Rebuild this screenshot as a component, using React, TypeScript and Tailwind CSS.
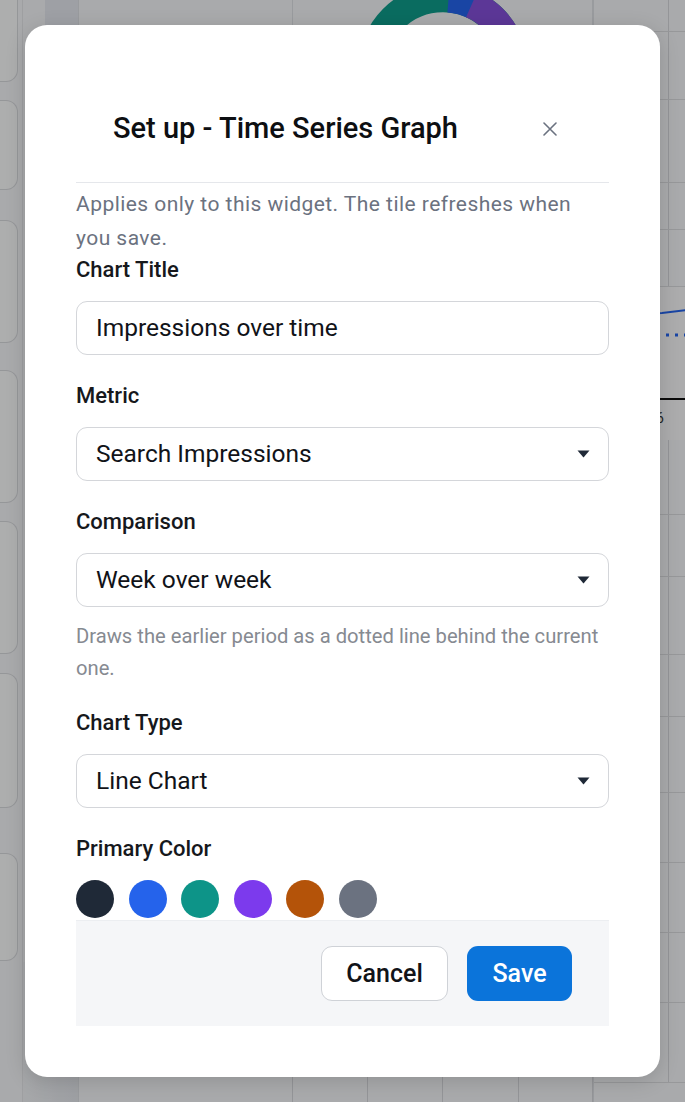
import React from "react";

const FONT = { fontFamily: "Roboto, 'Noto Sans', sans-serif" };

function Caret() {
  return (
    <svg width="13" height="8" viewBox="0 0 13 8" className="shrink-0">
      <path d="M0.5 0.5 L12.5 0.5 L6.5 7.5 Z" fill="#1f2937" />
    </svg>
  );
}

function SelectBox({ value }: { value: string }) {
  return (
    <div className="flex h-[54px] items-center justify-between rounded-[11px] border border-[#d4d6da] bg-white pl-[19px] pr-[18px]">
      <span className="text-[24.5px] text-[#111318]">{value}</span>
      <Caret />
    </div>
  );
}

function Label({ children }: { children: React.ReactNode }) {
  return <div className="text-[22px] font-medium leading-[30px] text-[#16181c]">{children}</div>;
}

const swatches = ["#1f2937", "#2563eb", "#0d9488", "#7c3aed", "#b45309", "#6b7280"];

const rightRows: { h: number; kind: "split" | "chart" | "axis" }[] = [
  { h: 32, kind: "split" },
  { h: 68, kind: "split" },
  { h: 83, kind: "split" },
  { h: 47, kind: "split" },
  { h: 57, kind: "split" },
  { h: 113, kind: "chart" },
  { h: 40, kind: "axis" },
  { h: 75, kind: "split" },
  { h: 62, kind: "split" },
  { h: 78, kind: "split" },
  { h: 62, kind: "split" },
  { h: 76, kind: "split" },
  { h: 70, kind: "split" },
  { h: 70, kind: "split" },
  { h: 70, kind: "split" },
  { h: 80, kind: "split" },
];

const leftCards = [
  { top: 0, h: 82 },
  { top: 18, h: 90 },
  { top: 30, h: 123 },
  { top: 27, h: 133 },
  { top: 18, h: 133 },
  { top: 19, h: 135 },
  { top: 45, h: 108 },
];

export default function App() {
  return (
    <div className="relative h-[1102px] w-full overflow-hidden bg-[#f3f4f6]" style={FONT}>
      {/* Backdrop dashboard */}
      <div className="flex h-full w-full">
        <div className="flex w-[18px] shrink-0 flex-col">
          {leftCards.map((c, i) => (
            <div
              key={i}
              className="rounded-r-[12px] border border-l-0 border-[#d6d8dc] bg-[#f8f9fa]"
              style={{ marginTop: i === 0 ? -12 : c.top, height: i === 0 ? c.h + 12 : c.h }}
            />
          ))}
        </div>
        <div className="w-[4px] shrink-0" />
        <div className="flex w-[56px] shrink-0 flex-col border-l border-[#e2e4e7]">
          <div className="ml-[22px] h-[25px] bg-[#e3e6ec]" />
          <div className="flex-1" />
          <div className="h-[140px] bg-gradient-to-r from-[#eef0f3] to-[#e2e5ea]" />
        </div>
        <div className="flex flex-1 flex-col border-l border-[#dcdee2]">
          <div className="flex h-[45px]">
            <div className="w-[214px] shrink-0 border-r border-[#dcdee2]" />
            <div className="flex w-[300px] shrink-0 justify-center overflow-hidden border-r border-[#dcdee2]">
              <svg width="170" height="170" viewBox="0 0 180 180" className="mt-[-16px] shrink-0">
                <circle cx="90" cy="90" r="75" fill="none" stroke="#0f9b8a" strokeWidth="30" strokeDasharray="200 500" transform="rotate(180 90 90)" />
                <circle cx="90" cy="90" r="75" fill="none" stroke="#2563eb" strokeWidth="30" strokeDasharray="28 500" strokeDashoffset="-2" transform="rotate(-87 90 90)" />
                <circle cx="90" cy="90" r="75" fill="none" stroke="#8550d8" strokeWidth="30" strokeDasharray="180 500" transform="rotate(-66 90 90)" />
              </svg>
            </div>
            <div className="flex-1" />
          </div>
          <div className="flex-1" />
          <div className="flex h-[62px] border-t border-[#dcdee2]">
            <div className="w-[214px] shrink-0 border-r border-[#d4d6da]" />
            <div className="w-[75px] shrink-0 border-r border-[#d4d6da]" />
            <div className="w-[75px] shrink-0 border-r border-[#d4d6da]" />
            <div className="w-[76px] shrink-0 border-r border-[#d4d6da]" />
            <div className="w-[74px] shrink-0 border-r border-[#d4d6da]" />
            <div className="flex-1" />
          </div>
        </div>
        <div className="flex w-[93px] shrink-0 flex-col border-l border-[#dcdee2]">
          {rightRows.map((r, i) =>
            r.kind === "split" ? (
              <div key={i} className="flex shrink-0 border-b border-[#d8dadd]" style={{ height: r.h }}>
                <div className="w-[75px] border-r border-[#d4d6da]" />
                <div className="flex-1" />
              </div>
            ) : r.kind === "chart" ? (
              <div key={i} className="flex shrink-0 flex-col justify-start border-b-2 border-[#111] bg-[#f6f7f8]" style={{ height: r.h }}>
                <svg width="93" height="60" viewBox="0 0 93 60" className="mt-[18px]">
                  <path d="M0 12 L68 8 L93 5" stroke="#2563eb" strokeWidth="2" fill="none" />
                  <path d="M0 30 L93 30" stroke="#2563eb" strokeWidth="3" strokeDasharray="3 6" fill="none" />
                </svg>
              </div>
            ) : (
              <div key={i} className="flex shrink-0 items-start bg-[#f6f7f8] pl-[62px] pt-[8px] text-[14px] text-[#333]" style={{ height: r.h }}>
                6
              </div>
            )
          )}
        </div>
      </div>

      {/* Overlay + modal */}
      <div className="absolute inset-0 bg-black/30 p-[25px]">
        <div className="flex h-[1052px] w-[635px] flex-col rounded-[22px] bg-white px-[51px] pt-[51px] shadow-[0_4px_20px_rgba(0,0,0,0.15)]">
          <div className="flex h-[107px] shrink-0 items-center justify-between border-b border-[#e5e7eb] pl-[37px] pr-[52px]">
            <h2 className="text-[29px] font-medium text-[#0d0f12]">Set up - Time Series Graph</h2>
            <svg width="14" height="14" viewBox="0 0 14 14">
              <path d="M1 1 L13 13 M13 1 L1 13" stroke="#6b7280" strokeWidth="1.6" strokeLinecap="round" />
            </svg>
          </div>
          <p className="mt-[4px] text-[21px] leading-[34px] tracking-[0.45px] text-[#6b7280]">
            Applies only to this widget. The tile refreshes when you save.
          </p>
          <Label>Chart Title</Label>
          <div className="mt-[16px] flex h-[54px] shrink-0 items-center rounded-[11px] border border-[#d4d6da] bg-white pl-[19px]">
            <span className="text-[24.5px] text-[#111318]">Impressions over time</span>
          </div>

          <div className="mt-[26px]">
            <Label>Metric</Label>
          </div>
          <div className="mt-[16px]">
            <SelectBox value="Search Impressions" />
          </div>

          <div className="mt-[26px]">
            <Label>Comparison</Label>
          </div>
          <div className="mt-[16px]">
            <SelectBox value="Week over week" />
          </div>
          <p className="mt-[13px] text-[20.2px] leading-[32px] text-[#868a91]">
            Draws the earlier period as a dotted line behind the current one.
          </p>

          <div className="mt-[24px]">
            <Label>Chart Type</Label>
          </div>
          <div className="mt-[16px]">
            <SelectBox value="Line Chart" />
          </div>

          <div className="mt-[26px]">
            <Label>Primary Color</Label>
          </div>
          <div className="mt-[16px] flex gap-[14.5px]">
            {swatches.map((c) => (
              <div key={c} className="h-[38px] w-[38px] rounded-full" style={{ backgroundColor: c }} />
            ))}
          </div>

          <div className="mt-[2px] flex h-[106px] shrink-0 items-center justify-end gap-[19px] border-t border-[#eceef1] bg-[#f5f6f8] pr-[37px]">
            <button className="h-[55px] w-[127px] rounded-[11px] border border-[#cfd2d7] bg-white text-[25px] font-medium text-[#111318]">
              Cancel
            </button>
            <button className="h-[55px] w-[105px] rounded-[11px] bg-[#0b74da] text-[25px] font-medium text-white">
              Save
            </button>
          </div>
        </div>
      </div>
    </div>
  );
}
